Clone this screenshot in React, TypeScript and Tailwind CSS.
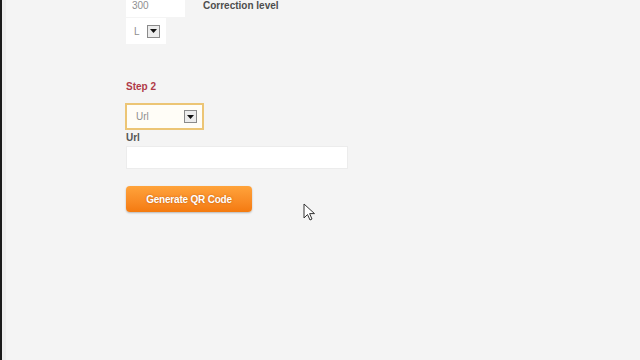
import { JSX } from "react";

function DropArrow(): JSX.Element {
  return (
    <span className="flex h-[13px] w-[13px] items-center justify-center border border-[#8a8a8a] bg-[#ececec]">
      <svg width="7" height="4" viewBox="0 0 7 4">
        <path d="M0 0 L7 0 L3.5 4 Z" fill="#111" />
      </svg>
    </span>
  );
}

function Cursor(): JSX.Element {
  return (
    <svg
      className="absolute left-[303px] top-[203px]"
      width="13"
      height="19"
      viewBox="0 0 13 19"
    >
      <path
        d="M1 1 L1 15 L4.5 11.5 L7 17 L9 16 L6.6 10.6 L11.5 10.6 Z"
        fill="#fff"
        stroke="#333"
        strokeWidth="1"
        strokeLinejoin="round"
      />
    </svg>
  );
}

export default function App(): JSX.Element {
  return (
    <div
      className="relative flex h-[360px] w-[640px] overflow-hidden bg-[#f4f4f4] text-[10px]"
      style={{ fontFamily: "Arial, 'Liberation Sans', sans-serif" }}
    >
      <div className="w-[2px] bg-[#1a1a1a]" />
      <div className="w-[4px] bg-[#ededed]" />

      <div className="flex flex-col pl-[120px]">
        {/* step 1 leftovers */}
        <div className="-mt-[7px] flex items-start">
          <div className="flex h-[24px] w-[59px] items-center bg-white pl-[6px] text-[#8f8f8f]">
            300
          </div>
          <div className="ml-[18px] flex h-[24px] items-center font-bold text-[#4d4d4d]">
            Correction level
          </div>
        </div>
        <div className="mt-[1px] flex h-[26px] w-[40px] items-center bg-white pl-[8px]">
          <span className="text-[#8f8f8f]">L</span>
          <span className="ml-[7px]">
            <DropArrow />
          </span>
        </div>

        {/* step 2 */}
        <div className="mt-[36px] h-[14px] font-bold leading-[14px] text-[#b03a48]">
          Step 2
        </div>
        <div className="-ml-[1px] mt-[9px] flex h-[27px] w-[79px] items-center border-2 border-[#ecc575] bg-[#fffdf7] pl-[9px] pr-[5px]">
          <span className="flex-1 text-[#8f8f8f]">Url</span>
          <DropArrow />
        </div>
        <div className="h-[14px] pt-[1px] font-bold leading-[14px] text-[#555]">
          Url
        </div>
        <div className="mt-[2px] h-[23px] w-[222px] border border-[#ececec] bg-white" />

        <button
          type="button"
          className="mt-[17px] flex h-[26px] w-[126px] items-center justify-center rounded-[4px] bg-gradient-to-b from-[#ffa33a] to-[#f47a0e] text-[10px] font-bold tracking-[-0.2px] text-white shadow-[0_1px_2px_rgba(0,0,0,0.25)] [text-shadow:0_0_2px_rgba(150,60,0,0.6)]"
        >
          Generate QR Code
        </button>
      </div>

      <Cursor />
    </div>
  );
}
